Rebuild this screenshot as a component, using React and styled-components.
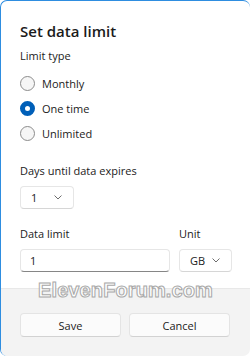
import React, { useState } from "react";
import styled, { createGlobalStyle } from "styled-components";

const GlobalStyle = createGlobalStyle`
  html, body {
    margin: 0;
    padding: 0;
    background: #ffffff;
  }
  * {
    box-sizing: border-box;
  }
`;

const Dialog = styled.div`
  position: relative;
  width: 250px;
  height: 356px;
  display: flex;
  flex-direction: column;
  background: #ffffff;
  border-top: 1px solid #2e8de0;
  border-left: 1px solid #2e8de0;
  border-radius: 7px;
  overflow: hidden;
  font-family: "Open Sans", "Noto Sans", sans-serif;
  color: #1b1b1b;
`;

const Body = styled.div`
  flex: 1;
  padding: 19px 19px 0 19px;
  display: flex;
  flex-direction: column;
`;

const Title = styled.h1`
  margin: 0;
  font-size: 15px;
  font-weight: 600;
  line-height: 22px;
`;

const Label = styled.div`
  font-size: 11px;
  line-height: 16px;
  margin-top: ${(p) => p.$top || 0}px;
`;

const RadioGroup = styled.div`
  display: flex;
  flex-direction: column;
  gap: 9px;
  margin-top: 11px;
`;

const RadioRow = styled.label`
  display: flex;
  align-items: center;
  gap: 7px;
  height: 16px;
  font-size: 11px;
  cursor: pointer;
`;

const RadioCircle = styled.span`
  width: 15px;
  height: 15px;
  border-radius: 50%;
  flex-shrink: 0;
  background: ${(p) => (p.$checked ? "#ffffff" : "#f6f6f6")};
  border: ${(p) => (p.$checked ? "5px solid #005fb8" : "1px solid #8c8c8c")};
`;

const Row = styled.div`
  display: flex;
  gap: 9px;
  margin-top: ${(p) => p.$top || 0}px;
`;

const Column = styled.div`
  display: flex;
  flex-direction: column;
  gap: 7px;
  width: ${(p) => p.$width}px;
`;

const Select = styled.div`
  width: ${(p) => p.$width}px;
  height: 23px;
  display: flex;
  align-items: center;
  justify-content: space-between;
  padding: 0 11px 0 10px;
  background: #ffffff;
  border: 1px solid #e6e6e6;
  border-bottom-color: #d6d6d6;
  border-radius: 4px;
  font-size: 11px;
`;

const Input = styled.div`
  width: ${(p) => p.$width}px;
  height: 23px;
  display: flex;
  align-items: center;
  padding: 0 9px;
  background: #ffffff;
  border: 1px solid #e6e6e6;
  border-bottom: 1px solid #868686;
  border-radius: 4px;
  font-size: 11px;
`;

const Chevron = () => (
  <svg width="8" height="5" viewBox="0 0 8 5">
    <path d="M0.8 0.8 L4 4 L7.2 0.8" fill="none" stroke="#5c5c5c" strokeWidth="0.9" strokeLinecap="round" strokeLinejoin="round" />
  </svg>
);

const Footer = styled.div`
  height: 68px;
  background: #f3f3f3;
  border-top: 1px solid #e8e8e8;
  display: flex;
  gap: 8px;
  padding: 24px 19px 0 19px;
`;

const Button = styled.button`
  width: 101px;
  height: 24px;
  background: #fbfbfb;
  border: 1px solid #e4e4e4;
  border-bottom-color: #d2d2d2;
  border-radius: 4px;
  font-family: inherit;
  font-size: 11px;
  color: #1b1b1b;
  padding: 0;
`;

const Watermark = styled.div`
  position: absolute;
  left: 0;
  right: 0;
  top: 278px;
  text-align: center;
  font-family: "Liberation Sans", Arial, sans-serif;
  font-weight: 700;
  font-size: 20px;
  letter-spacing: 0.1px;
  color: #ffffff;
  -webkit-text-stroke: 1px #a8a8a8;
  pointer-events: none;
`;

const options = ["Monthly", "One time", "Unlimited"];

export default function App() {
  const [type, setType] = useState("One time");
  return (
    <>
      <GlobalStyle />
      <Dialog>
        <Body>
          <Title>Set data limit</Title>
          <Label $top={6}>Limit type</Label>
          <RadioGroup>
            {options.map((o) => (
              <RadioRow key={o} onClick={() => setType(o)}>
                <RadioCircle $checked={type === o} />
                {o}
              </RadioRow>
            ))}
          </RadioGroup>
          <Label $top={22}>Days until data expires</Label>
          <Row $top={7}>
            <Select $width={54}>
              1 <Chevron />
            </Select>
          </Row>
          <Row $top={17}>
            <Column $width={150}>
              <Label>Data limit</Label>
              <Input $width={150}>1</Input>
            </Column>
            <Column $width={53}>
              <Label>Unit</Label>
              <Select $width={53}>
                GB <Chevron />
              </Select>
            </Column>
          </Row>
        </Body>
        <Footer>
          <Button>Save</Button>
          <Button>Cancel</Button>
        </Footer>
        <Watermark>ElevenForum.com</Watermark>
      </Dialog>
    </>
  );
}
